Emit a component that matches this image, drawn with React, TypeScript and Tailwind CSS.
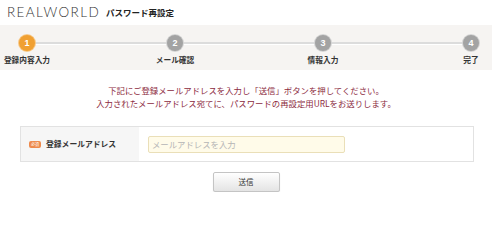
import React from "react";

const jp = '"Noto Sans CJK JP", "Noto Sans", sans-serif';

const steps = ["登録内容入力", "メール確認", "情報入力", "完了"];

function StepBar() {
  return (
    <div className="relative h-[45px] w-[492px] bg-[#f6f4f2]">
      {/* connecting line */}
      <div className="absolute left-[27px] top-[17px] h-[3px] w-[444px] border-t-2 border-[#dcdcdc] bg-white" />
      <div className="relative flex gap-[94px] pt-[10px]">
        {steps.map((label, i) => (
          <div key={label} className="flex w-[54px] shrink-0 flex-col items-center">
            <div
              className={`flex h-[16px] w-[16px] items-center justify-center rounded-full text-[9px] font-bold leading-none text-white ${
                i === 0
                  ? "bg-[#f0a032] ring-1 ring-[#f7c98a]"
                  : "bg-[#a3a3a3] ring-1 ring-[#d4d4d4]"
              }`}
              style={{ fontFamily: '"Liberation Sans", Arial, sans-serif' }}
            >
              {i + 1}
            </div>
            <div className="mt-[5px] whitespace-nowrap text-[7.7px] font-bold leading-none text-[#333]">
              {label}
            </div>
          </div>
        ))}
      </div>
    </div>
  );
}

export default function App() {
  return (
    <div className="w-[500px] overflow-hidden bg-white" style={{ fontFamily: jp }}>
      {/* header */}
      <div className="flex h-[25px] items-center pl-[7px]">
        <span
          className="text-[13.5px] font-light leading-none tracking-[1.4px] text-[#333]"
          style={{ fontFamily: 'Lato, "Liberation Sans", sans-serif' }}
        >
          REALWORLD
        </span>
        <span className="ml-[6px] text-[8.5px] font-bold leading-none text-[#222]">
          パスワード再設定
        </span>
      </div>

      <StepBar />

      <div className="w-[492px]">
        {/* message */}
        <div className="mt-[14px] text-center text-[8.4px] leading-[13px] text-[#8c2b3e]">
          <p>下記にご登録メールアドレスを入力し「送信」ボタンを押してください。</p>
          <p>入力されたメールアドレス宛てに、パスワードの再設定用URLをお送りします。</p>
        </div>

        {/* form */}
        <div className="ml-[20px] mt-[16px] flex h-[36px] w-[454px] border border-[#e2e2e2]">
          <div className="flex w-[118px] items-center bg-[#f6f6f6] pl-[8px]">
            <span className="flex h-[7px] w-[12px] items-center justify-center rounded-[2px] bg-[#ee8a4c] text-[4px] leading-none text-white">
              必須
            </span>
            <span className="ml-[5px] text-[7.8px] font-bold leading-none text-[#333]">
              登録メールアドレス
            </span>
          </div>
          <div className="flex flex-1 items-center pl-[9px]">
            <input
              type="text"
              placeholder="メールアドレスを入力"
              className="h-[17px] w-[197px] rounded-[2px] border border-[#eadfb8] bg-[#fffbe9] px-[3px] text-[8.4px] leading-none text-[#333] outline-none placeholder:text-[#b5b5b5]"
              style={{ fontFamily: jp }}
            />
          </div>
        </div>

        {/* button */}
        <div className="mt-[10px] flex justify-center">
          <button
            className="h-[20px] w-[67px] rounded-[2px] border border-[#c4c4c4] bg-gradient-to-b from-white to-[#e4e4e4] text-[7.5px] leading-none text-[#333] shadow-[0_1px_1px_rgba(0,0,0,0.12)]"
            style={{ fontFamily: jp }}
          >
            送信
          </button>
        </div>
      </div>
    </div>
  );
}
